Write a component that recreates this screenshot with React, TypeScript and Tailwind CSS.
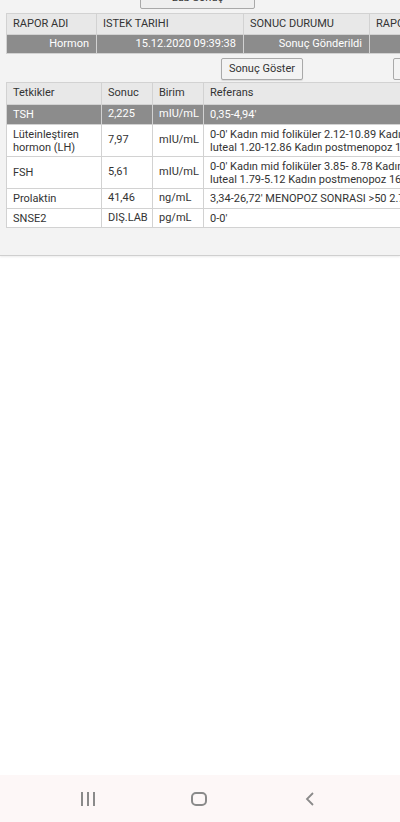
const raporCols = [
  { label: 'RAPOR ADI', w: 'w-[90px]' },
  { label: 'ISTEK TARIHI', w: 'w-[147px]' },
  { label: 'SONUC DURUMU', w: 'w-[126px]' },
  { label: 'RAPOR TARIHI', w: 'w-[140px]' },
];

const rapor = ['Hormon', '15.12.2020 09:39:38', 'Sonuç Gönderildi', ''];

type Row = {
  test: string[];
  sonuc: string;
  birim: string;
  ref: string[];
  h: string;
  active?: boolean;
};

const rows: Row[] = [
  { test: ['TSH'], sonuc: '2,225', birim: 'mIU/mL', ref: ["0,35-4,94'"], h: 'h-[20px]', active: true },
  {
    test: ['Lüteinleştiren', 'hormon (LH)'],
    sonuc: '7,97',
    birim: 'mIU/mL',
    ref: ["0-0' Kadın mid foliküler 2.12-10.89 Kadın mid", 'luteal 1.20-12.86 Kadın postmenopoz 10.87-58.64'],
    h: 'h-[32px]',
  },
  {
    test: ['FSH'],
    sonuc: '5,61',
    birim: 'mIU/mL',
    ref: ["0-0' Kadın mid foliküler 3.85- 8.78 Kadın mid", 'luteal 1.79-5.12 Kadın postmenopoz 16.74-113.59'],
    h: 'h-[32px]',
  },
  { test: ['Prolaktin'], sonuc: '41,46', birim: 'ng/mL', ref: ["3,34-26,72' MENOPOZ SONRASI >50 2.74-19.64"], h: 'h-[20px]' },
  { test: ['SNSE2'], sonuc: 'DIŞ.LAB', birim: 'pg/mL', ref: ["0-0'"], h: 'h-[19px]' },
];

const cell = 'border border-[#d2d2d2] px-[6px] align-middle';

export default function App() {
  return (
    <div className="w-[400px] h-[822px] bg-white flex flex-col overflow-hidden font-['Roboto',sans-serif] text-[11px] text-[#333]">
      <div className="bg-[#f3f3f3] h-[256px] border-b border-[#cfcfcf] shadow-[0_1px_2px_rgba(0,0,0,0.08)] overflow-hidden">
        <div className="flex">
          <button className="ml-[140px] w-[115px] h-[22px] -mt-[13px] bg-[#efefef] border border-[#a9a9a9] rounded-[2px] text-[#333] text-[11px]">
            Lab Sonuç
          </button>
        </div>

        <div className="ml-[6px] mt-[4px] w-[394px] overflow-hidden">
          <table className="table-fixed border-collapse w-[503px]">
            <thead>
              <tr className="h-[21px] bg-[#e8e8e8]">
                {raporCols.map((c) => (
                  <th key={c.label} className={`${cell} ${c.w} text-left font-normal`}>
                    {c.label}
                  </th>
                ))}
              </tr>
            </thead>
            <tbody>
              <tr className="h-[19px] bg-[#8c8c8c] text-white">
                {rapor.map((v, i) => (
                  <td key={i} className={`${cell} text-right pr-[7px]`}>
                    {v}
                  </td>
                ))}
              </tr>
            </tbody>
          </table>
        </div>

        <div className="flex mt-[4px] ml-[221px] gap-[8px] w-[200px]">
          <button className="shrink-0 w-[82px] h-[22px] bg-[#f3f3f3] border border-[#a9a9a9] rounded-[2px] shadow-[0_1px_1px_rgba(0,0,0,0.1)] text-[11px] text-[#333]">
            Sonuç Göster
          </button>
          <button className="shrink-0 ml-[82px] w-[82px] h-[22px] bg-[#f3f3f3] border border-[#a9a9a9] rounded-[2px]" />
        </div>

        <div className="ml-[6px] mt-[2px] w-[394px] overflow-hidden">
          <table className="table-fixed border-collapse w-[520px]">
            <thead>
              <tr className="h-[22px] bg-[#e8e8e8]">
                <th className={`${cell} w-[95px] text-left font-normal`}>Tetkikler</th>
                <th className={`${cell} w-[51px] text-left font-normal`}>Sonuc</th>
                <th className={`${cell} w-[51px] text-left font-normal`}>Birim</th>
                <th className={`${cell} text-left font-normal`}>Referans</th>
              </tr>
            </thead>
            <tbody>
              {rows.map((r) => (
                <tr key={r.test[0]} className={`${r.h} ${r.active ? 'bg-[#8c8c8c] text-white' : 'bg-white'}`}>
                  <td className={`${cell} leading-[13px]`}>
                    {r.test.map((t) => (
                      <div key={t}>{t}</div>
                    ))}
                  </td>
                  <td className={`${cell} whitespace-nowrap`}>{r.sonuc}</td>
                  <td className={`${cell} whitespace-nowrap`}>{r.birim}</td>
                  <td className={`${cell} leading-[13px] whitespace-nowrap`}>
                    {r.ref.map((t) => (
                      <div key={t}>{t}</div>
                    ))}
                  </td>
                </tr>
              ))}
            </tbody>
          </table>
        </div>
      </div>

      <div className="flex-1" />

      <nav className="h-[47px] bg-[#fdf7f7] flex items-center">
        <div className="ml-[81px] flex gap-[4px] h-[14px]">
          <span className="w-[2px] h-full bg-[#8a8a8a]" />
          <span className="w-[2px] h-full bg-[#8a8a8a]" />
          <span className="w-[2px] h-full bg-[#8a8a8a]" />
        </div>
        <div className="ml-[96px] w-[16px] h-[14px] border-[2px] border-[#8a8a8a] rounded-[5px]" />
        <svg width="12" height="16" viewBox="0 0 12 16" className="ml-[97px]">
          <path d="M9 2 L3 8 L9 14" fill="none" stroke="#8a8a8a" strokeWidth="1.8" />
        </svg>
      </nav>
    </div>
  );
}
